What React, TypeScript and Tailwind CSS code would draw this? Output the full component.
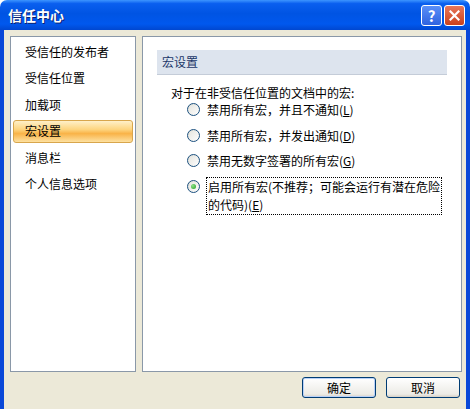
import React, { useState } from 'react';

const font = { fontFamily: '"Noto Sans CJK SC", "Noto Sans", sans-serif' };

const navItems = ['受信任的发布者', '受信任位置', '加载项', '宏设置', '消息栏', '个人信息选项'];

function Radio({ checked }: { checked?: boolean }) {
  return (
    <span className="relative flex h-[13px] w-[13px] shrink-0 items-center justify-center rounded-full border border-[#1c5180] bg-[linear-gradient(135deg,#dcdcd4,#ffffff)]">
      <span className="h-[9px] w-[9px] rounded-full bg-[linear-gradient(135deg,#e6e6e0,#fbfbfb)]" />
      {checked && <span className="absolute h-[5px] w-[5px] rounded-full bg-[radial-gradient(circle_at_35%_35%,#8fe08a,#21a121)]" />}
    </span>
  );
}

function Option({ children, checked, focus }: { children: React.ReactNode; checked?: boolean; focus?: boolean }) {
  return (
    <div className="flex items-start gap-[6px] pl-[30px]">
      <span className="mt-[3px]"><Radio checked={checked} /></span>
      <span className={`leading-[18px] whitespace-nowrap border ${focus ? 'border-dotted border-black w-[236px] pl-[1px]' : 'border-transparent'}`}>
        {children}
      </span>
    </div>
  );
}

export default function App() {
  const [active, setActive] = useState(3);
  return (
    <div className="w-[470px] h-[409px] flex flex-col overflow-hidden text-[12px] text-black" style={font}>
      {/* title bar */}
      <div className="h-[30px] shrink-0 flex items-center justify-between pl-[8px] pr-[5px] rounded-t-[7px] bg-[linear-gradient(180deg,#3d95ff_0%,#0a5fef_12%,#0054e3_45%,#0058ee_80%,#0047d0_100%)]">
        <span className="text-white font-bold text-[14px] [text-shadow:1px_1px_0_#0a1f6e]">信任中心</span>
        <div className="flex gap-[2px]">
          <div className="w-[21px] h-[21px] rounded-[3px] border border-white bg-[linear-gradient(180deg,#5a8ff8,#2e63e0)] flex items-center justify-center text-white font-bold text-[15px] leading-none">?</div>
          <div className="w-[21px] h-[21px] rounded-[3px] border border-white bg-[linear-gradient(180deg,#e8775a,#c9401c)] flex items-center justify-center">
            <svg width="11" height="11" viewBox="0 0 11 11"><path d="M1.5 1.5 L9.5 9.5 M9.5 1.5 L1.5 9.5" stroke="#fff" strokeWidth="2.2" strokeLinecap="square" /></svg>
          </div>
        </div>
      </div>

      {/* body */}
      <div className="flex-1 flex flex-col bg-[#ece9d8] border-l-[4px] border-r-[4px] border-[#0a48d8] relative">
        <div className="flex gap-[6px] pl-[6px] pt-[6px] pr-[4px]">
          {/* left nav */}
          <div className="w-[126px] h-[336px] bg-white border border-[#8a98a8] pt-[3px] px-[2px] flex flex-col">
            {navItems.map((item, i) => (
              <div
                key={item}
                onClick={() => setActive(i)}
                className={`h-[23px] mb-[3.5px] flex items-center pl-[11px] cursor-pointer ${i === active ? 'rounded-[3px] border border-[#d8a64c] bg-[linear-gradient(180deg,#fff0c8_0%,#fdd580_40%,#f9b348_60%,#fde1a0_100%)]' : 'border border-transparent'}`}
              >
                {item}
              </div>
            ))}
          </div>

          {/* right panel */}
          <div className="w-[320px] h-[336px] bg-white border border-[#8a98a8] pt-[13px] px-[14px]">
            <div className="h-[25px] flex items-center pl-[5px] bg-[#dde4ee] border-b border-[#c4ccd8] text-[#1a3668]">宏设置</div>
            <div className="pl-[14px] pt-[8px] leading-[19px]">对于在非受信任位置的文档中的宏:</div>
            <div className="flex flex-col gap-[5.5px] -mt-[2px]">
              <Option>禁用所有宏，并且不通知(<span className="underline">L</span>)</Option>
              <Option>禁用所有宏，并发出通知(<span className="underline">D</span>)</Option>
              <Option>禁用无数字签署的所有宏(<span className="underline">G</span>)</Option>
              <Option checked focus>
                启用所有宏(不推荐；可能会运行有潜在危险<br />的代码)(<span className="underline">E</span>)
              </Option>
            </div>
          </div>
        </div>

        {/* buttons */}
        <div className="flex justify-end gap-[10px] pr-[6px] mt-[5px]">
          <button className="w-[74px] h-[21px] rounded-[3px] border border-[#003c74] bg-[linear-gradient(180deg,#ffffff,#ecebe6_85%,#d6d0c5)] shadow-[inset_0_0_0_1px_#b9d1f8]" style={font}>确定</button>
          <button className="w-[74px] h-[21px] rounded-[3px] border border-[#003c74] bg-[linear-gradient(180deg,#ffffff,#ecebe6_85%,#d6d0c5)]" style={font}>取消</button>
        </div>
      </div>
    </div>
  );
}
